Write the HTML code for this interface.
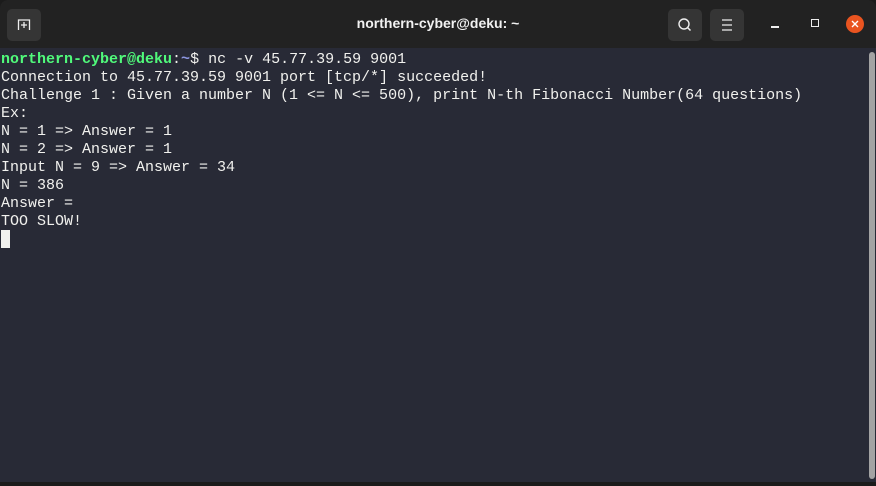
<!DOCTYPE html>
<html><head><meta charset="utf-8"><style>
html,body{margin:0;padding:0;width:876px;height:486px;overflow:hidden;background:#1b1b1b;}
.title{position:absolute;left:0;top:0;width:876px;height:48px;background:#222222;border-radius:8px 8px 0 0;}
.btn{position:absolute;top:9px;width:34px;height:32px;background:#353535;border-radius:5px;}
.tt{position:absolute;left:0;right:0;top:15px;text-align:center;color:#f2f2f2;font:bold 14px "Liberation Sans",sans-serif;}
.term{position:absolute;left:0;top:48px;width:876px;height:434px;background:#282a36;}
pre{margin:0;position:absolute;left:1px;top:3px;font:15px/18px "Liberation Mono",monospace;color:#f1f1ee;}
.g{color:#50fa7b;font-weight:bold}.b{color:#8c95e0;font-weight:bold}
.sb{position:absolute;left:869px;top:4px;width:6px;height:427px;background:#a3a3a3;border-radius:3px;}
.cur{display:inline-block;width:9px;height:18px;background:#f1f1ee;vertical-align:top;position:relative;top:-1px}
</style></head><body>
<div class="title">
<div class="btn" style="left:7px"><svg width="34" height="32"><path d="M11.5 21 V11 h11 V21" fill="none" stroke="#eee" stroke-width="1.3"/><path d="M17 13v6M14 16h6" stroke="#eee" stroke-width="1.3"/></svg></div>
<div class="tt">northern-cyber@deku: ~</div>
<div class="btn" style="left:668px"><svg width="34" height="32"><circle cx="16" cy="15" r="5" fill="none" stroke="#eee" stroke-width="1.4"/><path d="M19.5 18.5l3 3" stroke="#eee" stroke-width="1.5"/></svg></div>
<div class="btn" style="left:710px"><svg width="34" height="32"><path d="M12 11h10M12 16h10M12 21h10" stroke="#eee" stroke-width="1.3"/></svg></div>
<div style="position:absolute;left:771px;top:26px;width:8px;height:1.5px;background:#eee"></div>
<div style="position:absolute;left:811px;top:19px;width:6px;height:6px;border:1.3px solid #eee"></div>
<div style="position:absolute;left:846px;top:15px;width:18px;height:18px;border-radius:50%;background:#e95420"><svg width="18" height="18"><path d="M6 6l6 6M12 6l-6 6" stroke="#fff" stroke-width="1.4"/></svg></div>
</div>
<div class="term">
<pre><span class="g">northern-cyber@deku</span>:<span class="b">~</span>$ nc -v 45.77.39.59 9001
Connection to 45.77.39.59 9001 port [tcp/*] succeeded!
Challenge 1 : Given a number N (1 &lt;= N &lt;= 500), print N-th Fibonacci Number(64 questions)
Ex:
N = 1 =&gt; Answer = 1
N = 2 =&gt; Answer = 1
Input N = 9 =&gt; Answer = 34
N = 386
Answer =
TOO SLOW!
<span class="cur"></span></pre>
<div class="sb"></div>
</div>
</body></html>
